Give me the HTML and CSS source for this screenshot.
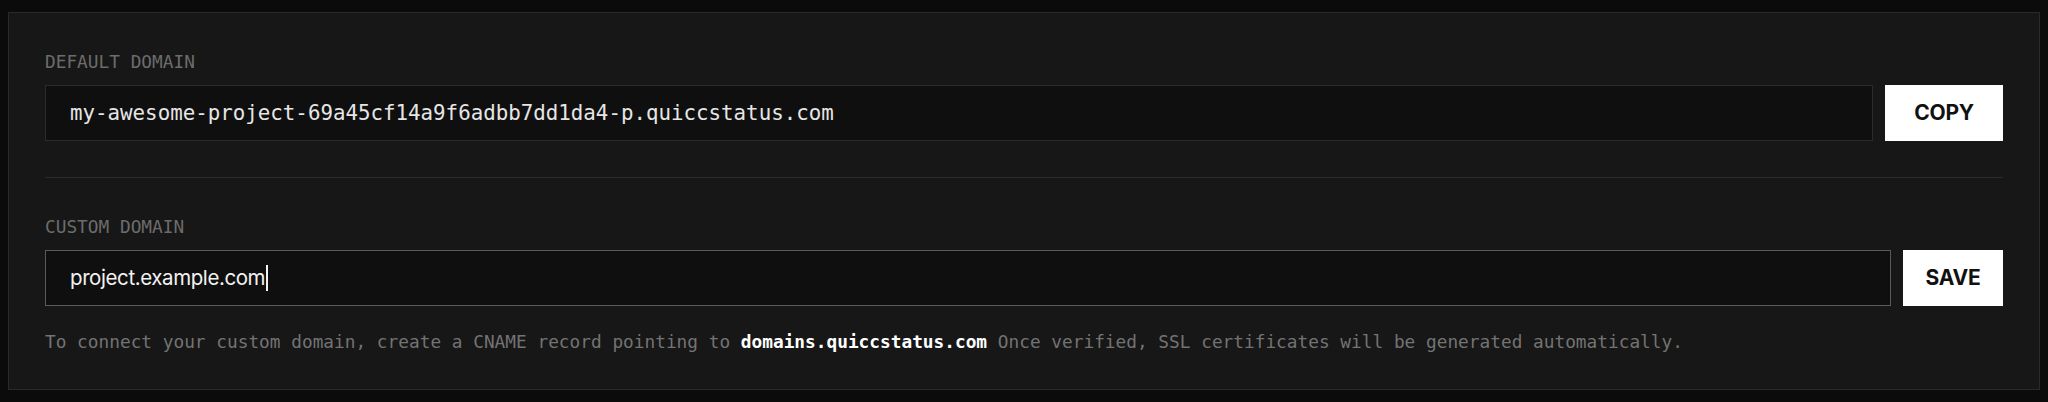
FILE: index.html
```html
<!DOCTYPE html>
<html lang="en">
<head>
<meta charset="utf-8">
<title>Domains</title>
<link rel="stylesheet" href="styles.css">
</head>
<body>
<section class="card">
  <div class="field">
    <div class="label">DEFAULT DOMAIN</div>
    <div class="row">
      <div class="input input-readonly">my-awesome-project-69a45cf14a9f6adbb7dd1da4-p.quiccstatus.com</div>
      <button class="btn btn-copy" type="button">COPY</button>
    </div>
  </div>
  <hr class="divider">
  <div class="field">
    <div class="label">CUSTOM DOMAIN</div>
    <div class="row">
      <div class="input input-focus"><span class="value">project.example.com</span><span class="caret"></span></div>
      <button class="btn btn-save" type="button">SAVE</button>
    </div>
    <p class="help">To connect your custom domain, create a CNAME record pointing to <strong class="help-strong">domains.quiccstatus.com</strong> Once verified, SSL certificates will be generated automatically.</p>
  </div>
</section>
</body>
</html>
```

FILE: styles.css
```css
html, body {
  margin: 0;
  background: #0b0b0b;
}
body {
  padding: 12px 8px;
  font-family: "DejaVu Sans Mono", monospace;
}
.card {
  background: #171717;
  border: 1px solid #2a2a2a;
  padding: 36px;
  height: 378px;
  box-sizing: border-box;
}
.field {
  display: flex;
  flex-direction: column;
}
.label {
  font-family: "DejaVu Sans Mono", monospace;
  font-size: 17.8px;
  line-height: 25px;
  color: #6c6c6c;
  margin-bottom: 10.5px;
}
.row {
  display: flex;
  gap: 12px;
}
.input {
  flex: 1;
  height: 56px;
  box-sizing: border-box;
  background: #0f0f0f;
  border: 1px solid #2b2b2b;
  padding: 0 24px;
  display: flex;
  align-items: center;
  color: #e6e6e6;
}
.input-readonly {
  font-family: "DejaVu Sans Mono", monospace;
  font-size: 20.8px;
}
.input-focus {
  border-color: #5a5a5a;
  font-family: Inter, "Liberation Sans", sans-serif;
  font-size: 20.5px;
  letter-spacing: -0.02em;
  color: #f2f2f2;
}
.caret {
  display: inline-block;
  width: 1.5px;
  height: 26px;
  background: #f2f2f2;
  margin-left: 1px;
}
.btn {
  height: 56px;
  box-sizing: border-box;
  border: none;
  background: #ffffff;
  color: #111111;
  font-family: Inter, "Liberation Sans", sans-serif;
  font-weight: 700;
  font-size: 21px;
  letter-spacing: -0.01em;
  cursor: pointer;
}
.btn-copy {
  padding: 0 29px;
}
.btn-save {
  padding: 0 22.5px;
}
.divider {
  border: none;
  height: 1.5px;
  background: #2b2b2b;
  margin: 36px 0 36px;
}
.help {
  margin: 23px 0 0;
  font-family: "DejaVu Sans Mono", monospace;
  font-size: 17.8px;
  line-height: 25px;
  color: #737373;
  white-space: nowrap;
}
.help-strong {
  color: #ffffff;
  font-weight: 700;
}
```
